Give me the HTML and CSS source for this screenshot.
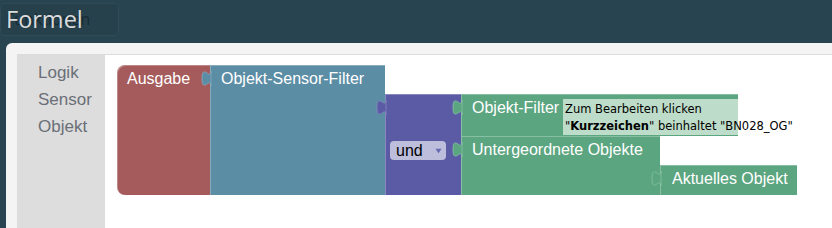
FILE: index.html
```html
<!DOCTYPE html>
<html lang="de">
<head>
<meta charset="utf-8">
<title>Formel</title>
<link rel="stylesheet" href="styles.css">
</head>
<body>
<header class="topbar">
  <div class="ghost-btn">Funktionen</div>
  <h1 class="title">Formel</h1>
</header>
<div class="modal">
  <div class="modal-body">
    <nav class="toolbox">
      <div class="cat">Logik</div>
      <div class="cat">Sensor</div>
      <div class="cat">Objekt</div>
    </nav>
    <main class="workspace">
      <div class="blocks">
        <div class="blk red">Ausgabe</div>
        <div class="blk blue">
          <svg class="tab" viewBox="0 0 10 15"><path d="M10 0 c0 10 -9 -8 -9 7.5 s9 -2.5 9 7.5 Z"/></svg>
          Objekt-Sensor-Filter
        </div>
        <div class="blk purple">
          <svg class="tab" viewBox="0 0 10 15"><path d="M10 0 c0 10 -9 -8 -9 7.5 s9 -2.5 9 7.5 Z"/></svg>
          <div class="dd"><span>und</span><svg class="caret" viewBox="0 0 8 6"><path d="M0.5 0.5 H7.5 L4 5.5 Z"/></svg></div>
        </div>
        <div class="stack">
          <div class="blk green g1">
            <svg class="tab" viewBox="0 0 10 15"><path d="M10 0 c0 10 -9 -8 -9 7.5 s9 -2.5 9 7.5 Z"/></svg>
            <span class="lbl">Objekt-Filter</span>
            <div class="field">
              <div>Zum Bearbeiten klicken</div>
              <div>"<b>Kurzzeichen</b>" beinhaltet "BN028_OG"</div>
            </div>
          </div>
          <div class="g-row">
            <div class="blk green g2">
              <svg class="tab" viewBox="0 0 10 15"><path d="M10 0 c0 10 -9 -8 -9 7.5 s9 -2.5 9 7.5 Z"/></svg>
              Untergeordnete Objekte
            </div>
            <div class="blk green g3">
              <svg class="tab" viewBox="0 0 10 15"><path d="M10 0 c0 10 -9 -8 -9 7.5 s9 -2.5 9 7.5 Z"/></svg>
              Aktuelles Objekt
            </div>
          </div>
        </div>
      </div>
    </main>
  </div>
</div>
</body>
</html>
```
FILE: styles.css
```css
html, body {
  margin: 0;
  padding: 0;
}
body {
  width: 832px;
  height: 228px;
  overflow: hidden;
  background: #284450;
  font-family: "Liberation Sans", Arial, sans-serif;
}

.topbar {
  position: relative;
  height: 43px;
}
.ghost-btn {
  position: absolute;
  left: 0;
  top: 3px;
  width: 119px;
  height: 33px;
  box-sizing: border-box;
  border: 1px solid #2e4b57;
  border-radius: 5px;
  background: #26414c;
  color: #182b34;
  font: 16px/31px "Open Sans", sans-serif;
  padding-left: 5px;
}
.title {
  position: relative;
  margin: 0;
  padding-left: 6px;
  font: 400 23.5px/38px "Open Sans", sans-serif;
  color: #dcdcdc;
}

.modal {
  margin-left: 6px;
  height: 185px;
  box-sizing: border-box;
  background: #f4f4f4;
  border-radius: 6px 0 0 0;
  padding: 11px 0 0 11px;
}
.modal-body {
  display: flex;
  height: 100%;
  border-top: 1px solid #dcdcdc;
}

.toolbox {
  width: 88px;
  flex: none;
  background: #dddddd;
  padding: 4px 0 0 21px;
  box-sizing: border-box;
}
.cat {
  font-size: 17px;
  line-height: 27px;
  color: #6a6f77;
}

.workspace {
  flex: 1;
  background: #ffffff;
  padding: 10px 0 0 12px;
}
.blocks {
  display: flex;
  align-items: flex-start;
}

.blk {
  position: relative;
  box-sizing: border-box;
  color: #ffffff;
  font-size: 16px;
  line-height: 18px;
  padding-top: 5px;
  white-space: nowrap;
  box-shadow: inset 1px 1px 0 rgba(255, 255, 255, 0.28);
}
.tab {
  position: absolute;
  left: -9px;
  top: 6px;
  width: 10px;
  height: 15px;
  overflow: visible;
}

.red {
  width: 93px;
  height: 130px;
  padding-left: 10px;
  background: #a55b5b;
  border-radius: 8px 0 0 8px;
}
.blue {
  width: 175px;
  height: 130px;
  padding-left: 11px;
  background: #5b8da5;
}
.blue .tab path { fill: #5b8da5; stroke: #84aabd; stroke-width: 0.8; }

.purple {
  width: 76px;
  height: 101px;
  margin-top: 29px;
  padding: 47px 0 0 5px;
  background: #5b5ba5;
}
.purple .tab path { fill: #5b5ba5; stroke: #8585bd; stroke-width: 0.8; }
.dd {
  display: flex;
  align-items: center;
  width: 56px;
  height: 19px;
  box-sizing: border-box;
  padding-left: 6px;
  border-radius: 4px;
  background: #bdbddc;
  color: #000000;
  font-size: 16px;
  line-height: 18px;
}
.caret {
  width: 7px;
  height: 6px;
  margin-left: 12px;
  margin-top: 1px;
}
.caret path { fill: #6a6ab0; }

.stack {
  margin-top: 29px;
  display: flex;
  flex-direction: column;
}
.green {
  background: #5ba580;
  padding-left: 11px;
}
.green .tab path { fill: #5ba580; stroke: #88c0a4; stroke-width: 0.8; }
.g1 {
  display: flex;
  align-items: flex-start;
  width: 277px;
  height: 42px;
}
.field {
  margin-left: auto;
  margin-top: 0;
  width: 175px;
  height: 36px;
  box-sizing: border-box;
  padding: 2px 0 0 2px;
  background: #bddcc9;
  color: #000000;
  font-family: "DejaVu Sans", Verdana, sans-serif;
  font-size: 11.5px;
  line-height: 17px;
  overflow: visible;
}
.field b { font-weight: 700; }
.g-row {
  display: flex;
  align-items: flex-start;
}
.g2 {
  width: 199px;
  height: 59px;
}
.g3 {
  width: 137px;
  height: 30px;
  margin-top: 29px;
  padding-left: 12px;
}
```
